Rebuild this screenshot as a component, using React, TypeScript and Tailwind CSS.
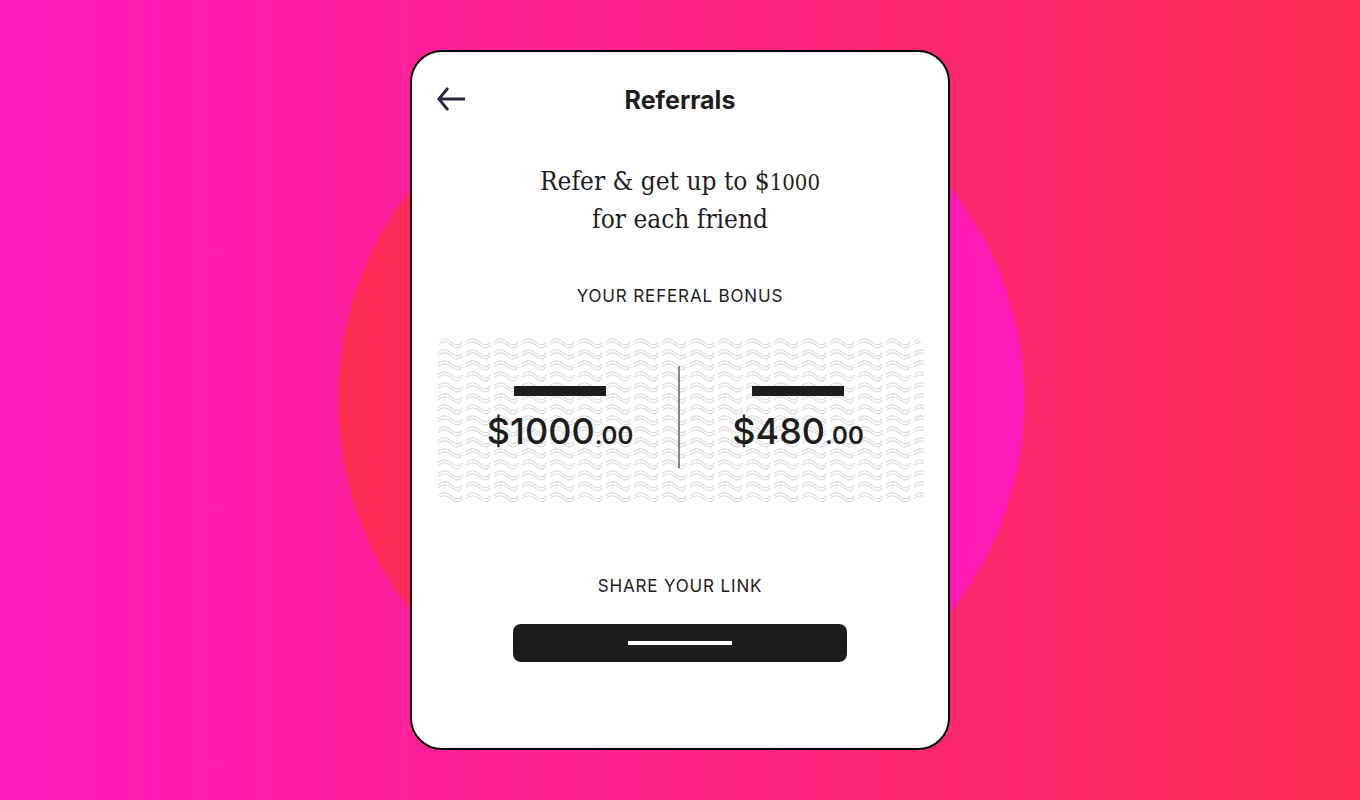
function Waves() {
  return (
    <svg className="col-start-1 row-start-1 h-full w-full" aria-hidden="true">
      <defs>
        <pattern id="wave" width="28" height="11" patternUnits="userSpaceOnUse">
          <path
            d="M0.2 3.6C4 .2 8.500 -.4 13 3.600S20.500 8.300 24.600 3.800M0.200 6.600C4 3.200 8.500 2.600 13 6.600S20.500 11.200 24.600 6.800"
            fill="none"
            stroke="#d6d6d6"
            strokeWidth="1.1"
          />
        </pattern>
      </defs>
      <rect width="100%" height="100%" rx="10" fill="url(#wave)" />
    </svg>
  );
}

function Amount({ whole, cents }: { whole: string; cents: string }) {
  return (
    <div className="mt-5 flex flex-1 flex-col items-center gap-4">
      <div className="h-[10px] w-[92px] bg-[#1d1d1d]" />
      <p className="text-4xl leading-[38px] font-medium">
        {whole}
        <span className="text-2xl leading-none font-semibold">{cents}</span>
      </p>
    </div>
  );
}

export default function App() {
  return (
    <div className="grid min-h-screen place-items-center overflow-hidden bg-linear-to-r/srgb from-[#ff1abc] to-[#fd2d50] font-['Inter',sans-serif] text-[#1d1d1d]">
      <div className="col-start-1 row-start-1 ml-0.5 aspect-square w-full max-w-[686px] rounded-full bg-linear-to-r/srgb from-[#fd2d50] to-[#ff1abc]" />
      <main className="col-start-1 row-start-1 my-[50px] flex w-full max-w-[540px] flex-col rounded-[32px] border-2 border-black bg-white px-6 pt-8 pb-[86px]">
        <header className="grid grid-cols-[32px_1fr_32px] items-center">
          <button type="button" aria-label="Back" className="h-8 w-8">
            <svg width="32" height="32" viewBox="0 0 32 32" fill="none" stroke="#2a2540" strokeWidth="2.8" aria-hidden="true">
              <path d="M29 15H3M12 4L2.800 15L12 26" />
            </svg>
          </button>
          <h1 className="text-center text-[25px] leading-8 font-bold">Referrals</h1>
        </header>
        <p className="mt-[46px] text-center font-['DejaVu_Serif_Condensed','DejaVu_Serif',serif] text-[26px] leading-[38px]">
          Refer &amp; get up to $<span className="text-[22px] leading-none">1000</span>
          <br />
          for each friend
        </p>
        <h2 className="mt-[46px] text-center text-[17px] leading-6 tracking-wider">YOUR REFERAL BONUS</h2>
        <section className="mt-[30px] ml-0.5 grid">
          <Waves />
          <div className="col-start-1 row-start-1 flex h-[164px] items-start pt-7 pr-2 pl-1">
            <Amount whole="$1000" cents=".00" />
            <div className="h-[102px] w-0.5 bg-[#858585]" />
            <Amount whole="$480" cents=".00" />
          </div>
        </section>
        <h2 className="mt-[72px] text-center text-[17px] leading-6 tracking-wider">SHARE YOUR LINK</h2>
        <button type="button" aria-label="Share your link" className="mx-auto mt-[26px] flex h-[38px] w-full max-w-[334px] items-center justify-center rounded-lg bg-[#1d1d1d]">
          <span className="h-1 w-[104px] bg-white" />
        </button>
      </main>
    </div>
  );
}
